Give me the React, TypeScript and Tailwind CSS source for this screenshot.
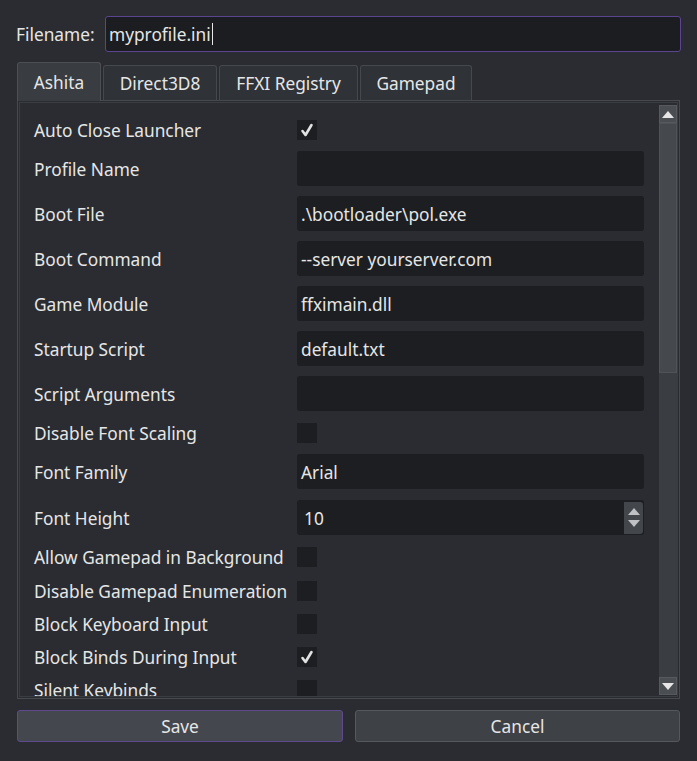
import React from "react";

type Row =
  | { label: string; type: "check"; checked: boolean; mt: string }
  | { label: string; type: "text"; value: string; mt: string }
  | { label: string; type: "spin"; value: string; mt: string };

const rows: Row[] = [
  { label: "Auto Close Launcher", type: "check", checked: true, mt: "mt-[15px]" },
  { label: "Profile Name", type: "text", value: "", mt: "mt-[9px]" },
  { label: "Boot File", type: "text", value: ".\\bootloader\\pol.exe", mt: "mt-[10px]" },
  { label: "Boot Command", type: "text", value: "--server yourserver.com", mt: "mt-[10px]" },
  { label: "Game Module", type: "text", value: "ffximain.dll", mt: "mt-[10px]" },
  { label: "Startup Script", type: "text", value: "default.txt", mt: "mt-[10px]" },
  { label: "Script Arguments", type: "text", value: "", mt: "mt-[10px]" },
  { label: "Disable Font Scaling", type: "check", checked: false, mt: "mt-[10px]" },
  { label: "Font Family", type: "text", value: "Arial", mt: "mt-[9px]" },
  { label: "Font Height", type: "spin", value: "10", mt: "mt-[11px]" },
  { label: "Allow Gamepad in Background", type: "check", checked: false, mt: "mt-[10px]" },
  { label: "Disable Gamepad Enumeration", type: "check", checked: false, mt: "mt-[10px]" },
  { label: "Block Keyboard Input", type: "check", checked: false, mt: "mt-[9px]" },
  { label: "Block Binds During Input", type: "check", checked: true, mt: "mt-[9px]" },
  { label: "Silent Keybinds", type: "check", checked: false, mt: "mt-[9px]" },
];

function Check({ checked }: { checked: boolean }) {
  return (
    <div className="w-[20px] h-[20px] bg-[#1c1e21] flex items-center justify-center">
      {checked && (
        <svg width="16" height="16" viewBox="0 0 16 16">
          <path d="M3.5 9 L6.5 13 L12.5 3" fill="none" stroke="#e2e2e2" strokeWidth="2.6" strokeLinecap="round" strokeLinejoin="round" />
        </svg>
      )}
    </div>
  );
}

function Tri({ up, color }: { up: boolean; color: string }) {
  return (
    <svg width="12" height="7" viewBox="0 0 12 7">
      {up ? <path d="M0 7 L6 0 L12 7 Z" fill={color} /> : <path d="M0 0 L6 7 L12 0 Z" fill={color} />}
    </svg>
  );
}

export default function App() {
  return (
    <div className="w-[697px] h-[761px] bg-[#2a2c31] text-[#e6e6e6] text-[17.3px] font-['Noto_Sans',sans-serif] flex flex-col px-[16px] pt-[16px] overflow-hidden">
      {/* Filename row */}
      <div className="flex items-center h-[36px]">
        <div className="w-[89px] shrink-0 pt-[2px]">Filename:</div>
        <div className="flex-1 h-[36px] border border-[#5b4590] bg-[#1b1d20] rounded-[3px] flex items-center pl-[3px]">
          <span className="pt-[2px]">myprofile.ini</span>
          <span className="inline-block w-[1px] h-[22px] bg-[#e8e8e8] ml-[1px]"></span>
        </div>
      </div>

      {/* Tabs */}
      <div className="mt-[10px] flex items-end gap-[2px] pl-[1px] h-[38px] relative z-10">
        <div className="w-[84px] h-[39px] -mb-[1px] pt-[2px] bg-[#393c41] border border-b-0 border-[#4c4f54] rounded-t-[3px] flex items-center justify-center">
          Ashita
        </div>
        <div className="w-[114px] h-[35px] pt-[2px] bg-[#2f3236] border border-b-0 border-[#45484c] rounded-t-[3px] flex items-center justify-center">
          Direct3D8
        </div>
        <div className="w-[139px] h-[35px] pt-[2px] bg-[#2f3236] border border-b-0 border-[#45484c] rounded-t-[3px] flex items-center justify-center">
          FFXI Registry
        </div>
        <div className="w-[112px] h-[35px] pt-[2px] bg-[#2f3236] border border-b-0 border-[#45484c] rounded-t-[3px] flex items-center justify-center">
          Gamepad
        </div>
      </div>

      {/* Pane */}
      <div className="ml-[1px] w-[663px] h-[599px] border border-[#46494d] p-[1px] flex">
        <div className="flex-1 border border-[#3a3d41] flex overflow-hidden bg-[#2a2c31]">
          <div className="flex-1 flex flex-col pl-[14px] pr-[15px] overflow-hidden">
            {rows.map((r) => (
              <div key={r.label} className={`flex items-center shrink-0 ${r.mt} ${r.type === "check" ? "h-[24px]" : "h-[35px]"}`}>
                <div className="w-[263px] shrink-0 whitespace-nowrap pt-[2px]">{r.label}</div>
                {r.type === "check" && <Check checked={r.checked} />}
                {r.type === "text" && (
                  <div className="flex-1 h-[35px] bg-[#1c1e21] rounded-[3px] flex items-center pl-[4px] pt-[2px]">{r.value}</div>
                )}
                {r.type === "spin" && (
                  <div className="flex-1 h-[35px] bg-[#1c1e21] rounded-[3px] flex items-center pl-[7px] pr-[1px]">
                    <span className="flex-1 pt-[2px]">{r.value}</span>
                    <div className="w-[19px] h-[32px] bg-[#43464a] rounded-r-[3px] flex flex-col items-center justify-center gap-[5px]">
                      <Tri up color="#bfc1c4" />
                      <Tri up={false} color="#bfc1c4" />
                    </div>
                  </div>
                )}
              </div>
            ))}
          </div>
          {/* Scrollbar */}
          <div className="w-[18px] mt-[2px] mb-[1px] flex flex-col bg-[#3a3d41]">
            <div className="h-[18px] bg-[#4a4d51] border border-[#56595d] flex items-center justify-center">
              <Tri up color="#e6e6e6" />
            </div>
            <div className="h-[250px] bg-[#45484c] border border-[#4f5256]"></div>
            <div className="flex-1"></div>
            <div className="h-[18px] bg-[#4a4d51] border border-[#56595d] flex items-center justify-center">
              <Tri up={false} color="#e6e6e6" />
            </div>
          </div>
        </div>
      </div>

      {/* Buttons */}
      <div className="mt-[11px] flex gap-[12px] pl-[1px]">
        <div className="w-[326px] h-[32px] pt-[2px] bg-[#45474f] border border-[#5e4a8c] rounded-[3px] flex items-center justify-center">
          Save
        </div>
        <div className="w-[325px] h-[32px] pt-[2px] bg-[#3e4145] border border-[#55585c] rounded-[3px] flex items-center justify-center">
          Cancel
        </div>
      </div>
    </div>
  );
}
